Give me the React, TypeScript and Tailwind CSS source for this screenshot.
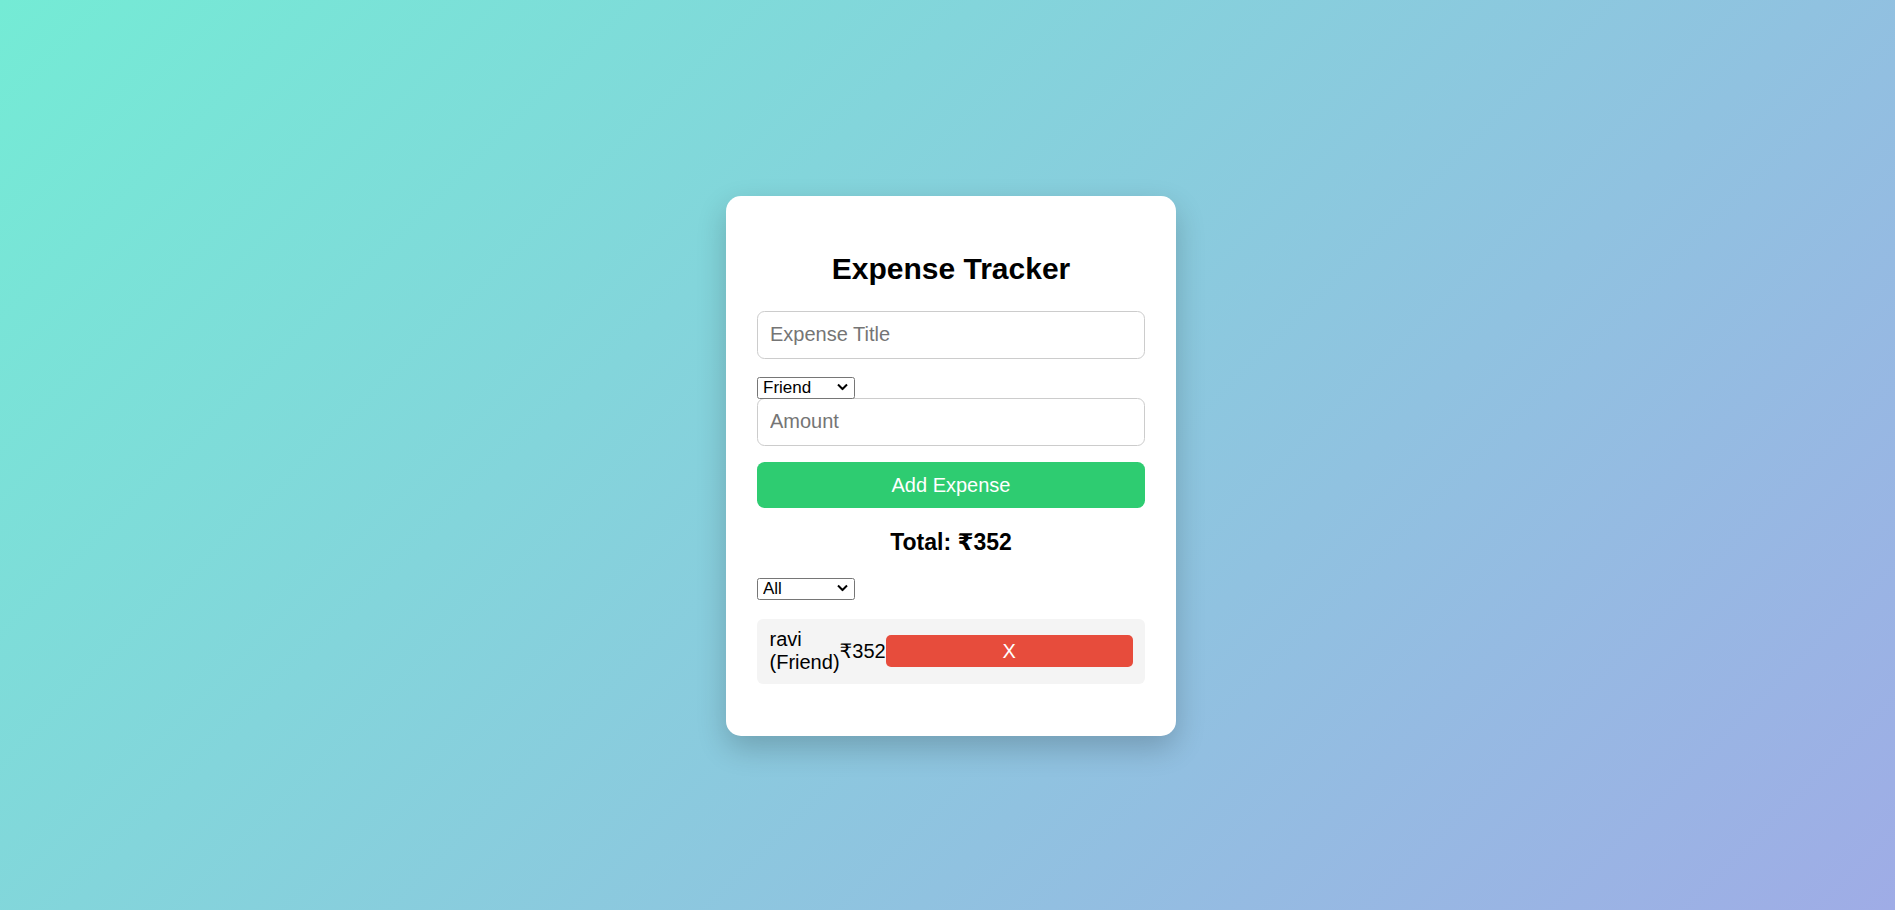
import { useState } from "react";

type Expense = { id: number; title: string; category: string; amount: number };

function Chevron() {
  return (
    <svg
      className="pointer-events-none absolute right-[7px] top-1/2 -translate-y-1/2"
      width="11"
      height="7"
      viewBox="0 0 11 7"
      fill="none"
    >
      <path d="M1 1l4.5 4.5L10 1" stroke="#000" strokeWidth="2" />
    </svg>
  );
}

function Select({
  value,
  options,
  onChange,
}: {
  value: string;
  options: string[];
  onChange: (v: string) => void;
}) {
  return (
    <div className="relative w-[98px] h-[22px]">
      <select
        value={value}
        onChange={(e) => onChange(e.target.value)}
        className="appearance-none w-full h-full border border-[#767676] rounded-[2.5px] bg-white pl-[5px] text-[17px] leading-[20px] text-black outline-none"
      >
        {options.map((o) => (
          <option key={o}>{o}</option>
        ))}
      </select>
      <Chevron />
    </div>
  );
}

export default function App() {
  const [title, setTitle] = useState("");
  const [category, setCategory] = useState("Friend");
  const [amount, setAmount] = useState("");
  const [filter, setFilter] = useState("All");
  const [expenses, setExpenses] = useState<Expense[]>([
    { id: 1, title: "ravi", category: "Friend", amount: 352 },
  ]);

  const total = expenses.reduce((s, e) => s + e.amount, 0);
  const shown =
    filter === "All" ? expenses : expenses.filter((e) => e.category === filter);

  const add = () => {
    if (!title || !amount) return;
    setExpenses([
      ...expenses,
      { id: Date.now(), title, category, amount: Number(amount) },
    ]);
    setTitle("");
    setAmount("");
  };

  return (
    <div className="min-h-screen w-full flex justify-center pl-[7px] pt-[196px] bg-[linear-gradient(135deg,#74ebd5,#9face6)] font-['Liberation_Sans',Arial,'DejaVu_Sans',sans-serif] text-black">
      <div className="w-[450px] h-fit bg-white rounded-[15px] px-[31px] pt-[56px] pb-[52px] shadow-[0_12px_30px_rgba(0,0,0,0.2)]">
        <h2 className="text-center text-[30px] leading-[33.5px] font-bold mb-[25px]">
          Expense Tracker
        </h2>

        {/* Form */}
        <input
          value={title}
          onChange={(e) => setTitle(e.target.value)}
          placeholder="Expense Title"
          className="block w-full h-[48px] border border-[#ccc] rounded-[7.5px] px-[12px] text-[20px] placeholder:text-[#757575] outline-none"
        />
        <div className="mt-[17px]">
          <Select
            value={category}
            options={["Friend", "Family", "Work", "Other"]}
            onChange={setCategory}
          />
        </div>
        <input
          value={amount}
          onChange={(e) => setAmount(e.target.value)}
          placeholder="Amount"
          type="number"
          className="block w-full h-[48px] border border-[#ccc] rounded-[7.5px] px-[12px] text-[20px] placeholder:text-[#757575] outline-none"
        />
        <button
          onClick={add}
          className="block w-full h-[46px] mt-[16px] bg-[#2ecc71] text-white text-[20px] rounded-[7.5px]"
        >
          Add Expense
        </button>

        <h3 className="mt-[21px] text-center text-[23px] leading-[26px] font-bold">
          Total: ₹{total}
        </h3>

        <div className="mt-[22px]">
          <Select
            value={filter}
            options={["All", "Friend", "Family", "Work", "Other"]}
            onChange={setFilter}
          />
        </div>

        {/* List */}
        <ul className="mt-[20px] flex flex-col gap-[12px]">
          {shown.map((e) => (
            <li
              key={e.id}
              className="flex items-center bg-[#f4f4f4] rounded-[6px] px-[12.5px] py-[9.5px] text-[20px] leading-[23px]"
            >
              <span className="w-min">
                {e.title} ({e.category})
              </span>
              <span>₹{e.amount}</span>
              <button
                onClick={() => setExpenses(expenses.filter((x) => x.id !== e.id))}
                className="flex-1 h-[32px] bg-[#e74c3c] text-white text-[20px] rounded-[5px]"
              >
                X
              </button>
            </li>
          ))}
        </ul>
      </div>
    </div>
  );
}
